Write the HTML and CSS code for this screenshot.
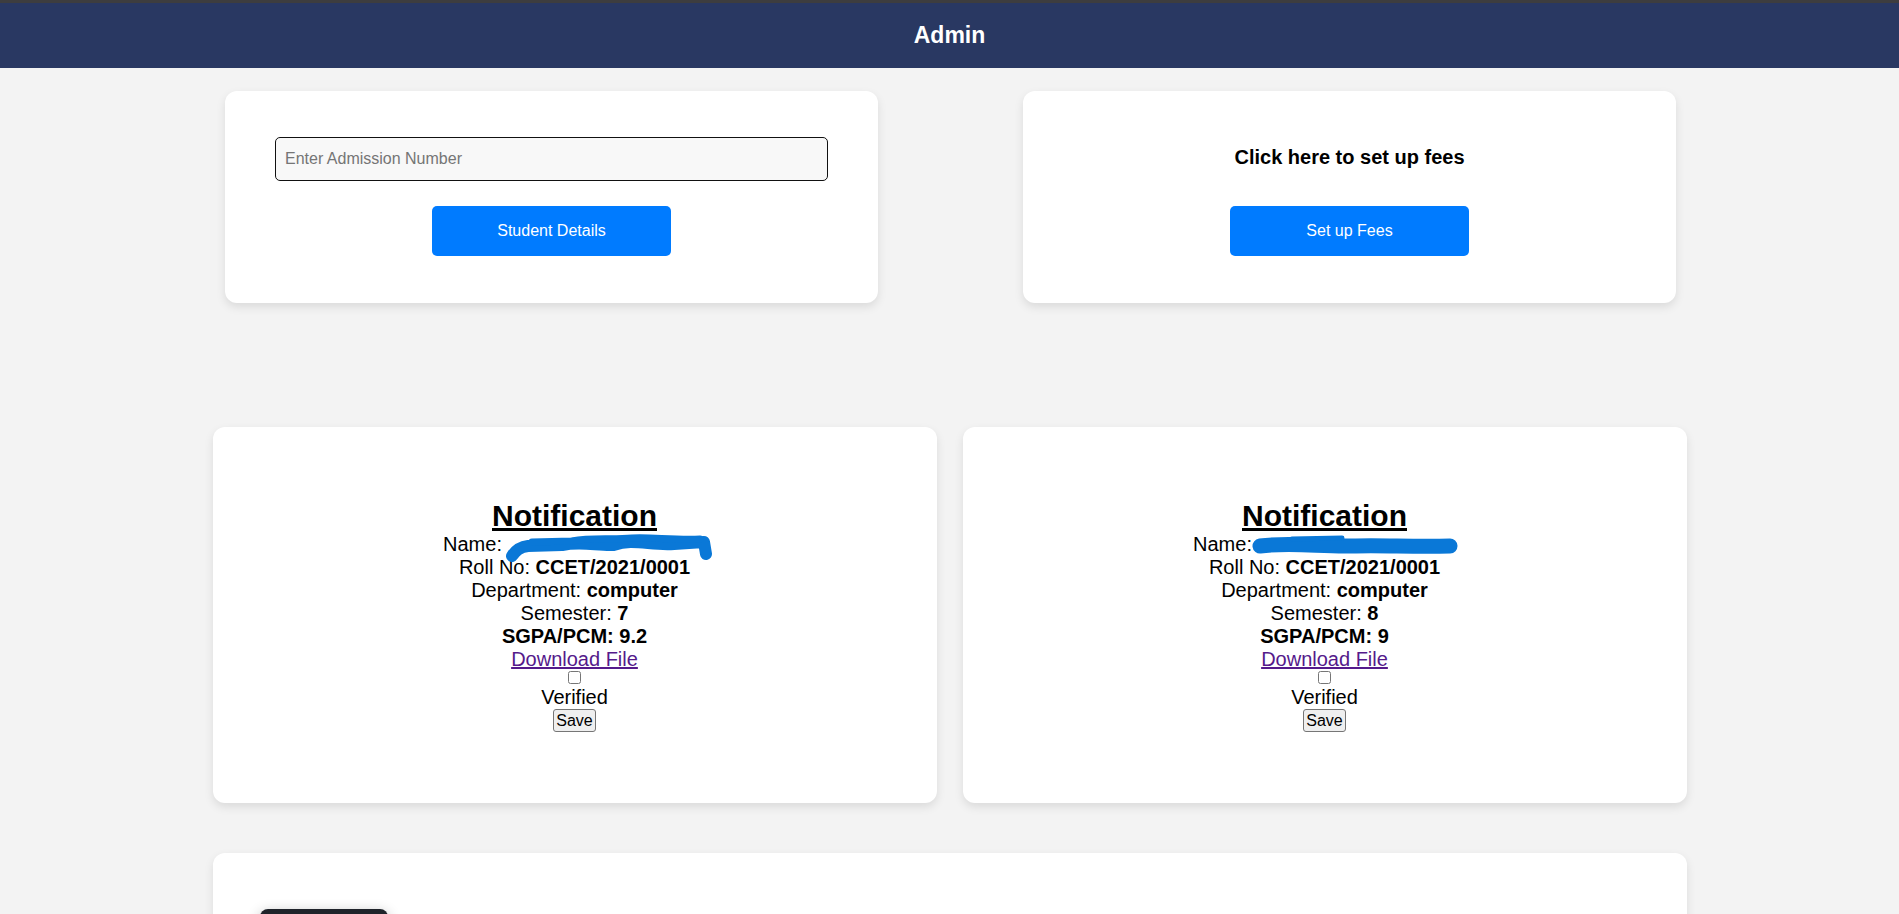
FILE: index.html
```html
<!DOCTYPE html>
<html lang="en">
<head>
<meta charset="utf-8">
<title>Admin</title>
<link rel="stylesheet" href="styles.css">
</head>
<body>
<header class="topbar">
  <h1 class="topbar-title">Admin</h1>
</header>

<main class="page">
  <section class="action-row">
    <div class="action-card">
      <input class="admission-input" type="text" placeholder="Enter Admission Number">
      <button class="primary-btn">Student Details</button>
    </div>
    <div class="action-card">
      <p class="action-title">Click here to set up fees</p>
      <button class="primary-btn">Set up Fees</button>
    </div>
  </section>

  <section class="notify-row">
    <div class="notify-card">
      <div class="notify-body">
        <h2 class="notify-heading">Notification</h2>
        <p class="notify-line">Name:<span class="redacted"><svg class="scribble" width="212" height="30" viewBox="0 0 212 30"><path d="M10 24 C14 18 18 15 26 14 L60 13 C80 9 96 14 112 13 C130 6 150 14 172 12 L202 10 L204 22" fill="none" stroke="#0a78d7" stroke-width="12" stroke-linecap="round" stroke-linejoin="round"/><path d="M30 10 L70 9 C90 5 110 8 130 6 C150 5 170 8 198 7" fill="none" stroke="#0a78d7" stroke-width="7" stroke-linecap="round"/></svg></span></p>
        <p class="notify-line">Roll No: <b>CCET/2021/0001</b></p>
        <p class="notify-line">Department: <b>computer</b></p>
        <p class="notify-line">Semester: <b>7</b></p>
        <p class="notify-line"><b>SGPA/PCM: 9.2</b></p>
        <a class="notify-link" href="#file">Download File</a>
        <input class="verify-box" type="checkbox">
        <label class="notify-line">Verified</label>
        <button class="save-btn">Save</button>
      </div>
    </div>
    <div class="notify-card">
      <div class="notify-body">
        <h2 class="notify-heading">Notification</h2>
        <p class="notify-line">Name:<span class="redacted"><svg class="scribble" width="206" height="24" viewBox="0 0 206 24"><path d="M8 14 C40 10 70 15 100 14 C130 13 160 15 198 14" fill="none" stroke="#0a78d7" stroke-width="15" stroke-linecap="round"/><path d="M40 7 L90 6" fill="none" stroke="#0a78d7" stroke-width="5" stroke-linecap="round"/></svg></span></p>
        <p class="notify-line">Roll No: <b>CCET/2021/0001</b></p>
        <p class="notify-line">Department: <b>computer</b></p>
        <p class="notify-line">Semester: <b>8</b></p>
        <p class="notify-line"><b>SGPA/PCM: 9</b></p>
        <a class="notify-link" href="#file">Download File</a>
        <input class="verify-box" type="checkbox">
        <label class="notify-line">Verified</label>
        <button class="save-btn">Save</button>
      </div>
    </div>
  </section>

  <section class="bottom-card">
    <button class="dark-btn" aria-label="Action"></button>
  </section>
</main>
</body>
</html>
```

FILE: styles.css
```css
html {
  scrollbar-width: none;
}
html::-webkit-scrollbar {
  display: none;
}
body {
  margin: 0;
  background: #f3f3f3;
  font-family: "Liberation Sans", Arial, sans-serif;
  color: #000;
}

.topbar {
  border-top: 3px solid #3d3d3f;
  background: #293862;
  height: 65px;
  display: flex;
  align-items: center;
  justify-content: center;
}
.topbar-title {
  margin: 0;
  color: #fff;
  font-size: 23px;
  font-weight: bold;
}

.page {
  display: flex;
  flex-direction: column;
  align-items: center;
  padding-top: 23px;
}

.action-row {
  display: flex;
  gap: 145px;
  margin-left: 2px;
}
.action-card {
  box-sizing: border-box;
  width: 653px;
  height: 212px;
  background: #fff;
  border-radius: 12px;
  box-shadow: 0 4px 10px rgba(0, 0, 0, 0.1);
  padding: 46px 50px 0;
  display: flex;
  flex-direction: column;
  align-items: center;
}
.admission-input {
  box-sizing: border-box;
  width: 100%;
  height: 44px;
  border: 1px solid #111;
  border-radius: 5px;
  background: #f8f8f8;
  padding: 0 9px;
  font-family: "Liberation Sans", Arial, sans-serif;
  font-size: 16px;
  margin: 0 0 25px;
}
.admission-input::placeholder {
  color: #757575;
}
.action-title {
  margin: 0 0 29px;
  line-height: 40px;
  font-size: 20px;
  font-weight: bold;
}
.primary-btn {
  width: 239px;
  height: 50px;
  border: none;
  border-radius: 5px;
  background: #007bff;
  color: #fff;
  font-family: "Liberation Sans", Arial, sans-serif;
  font-size: 16px;
}

.notify-row {
  display: flex;
  gap: 26px;
  margin-top: 124px;
}
.notify-card {
  width: 724px;
  height: 376px;
  background: #fff;
  border-radius: 12px;
  box-shadow: 0 4px 10px rgba(0, 0, 0, 0.1);
  display: flex;
  align-items: center;
  justify-content: center;
}
.notify-body {
  display: flex;
  flex-direction: column;
  align-items: center;
  font-size: 20px;
  line-height: 23px;
}
.notify-heading {
  margin: 0;
  font-size: 30px;
  line-height: 34px;
  font-weight: bold;
  text-decoration: underline;
}
.notify-line {
  margin: 0;
  white-space: nowrap;
}
.redacted {
  position: relative;
  display: inline-block;
  vertical-align: -3px;
  width: 204px;
  height: 14px;
}
.scribble {
  position: absolute;
  left: 0;
  top: -8px;
}
.notify-link {
  color: #551a8b;
  text-decoration: underline;
}
.verify-box {
  width: 13px;
  height: 13px;
  margin: 0 0 2px;
}
.save-btn {
  font-family: "Liberation Sans", Arial, sans-serif;
  font-size: 16px;
  padding: 1px 2px;
  border: 1px solid #767676;
  border-radius: 3px;
  background: #efefef;
  color: #000;
  line-height: 19px;
}

.bottom-card {
  box-sizing: border-box;
  width: 1474px;
  height: 300px;
  margin-top: 50px;
  background: #fff;
  border-radius: 12px;
  box-shadow: 0 4px 10px rgba(0, 0, 0, 0.1);
  padding: 56px 47px;
}
.dark-btn {
  display: block;
  width: 128px;
  height: 44px;
  border: none;
  border-radius: 8px;
  background: #1f232a;
  box-shadow: 0 4px 14px rgba(0, 0, 0, 0.3);
}
```
